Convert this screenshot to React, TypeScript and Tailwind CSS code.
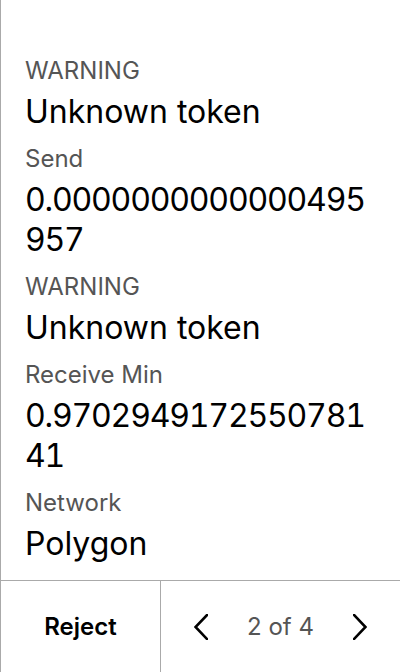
const rows = [
  { label: 'WARNING', value: 'Unknown token', num: false },
  { label: 'Send', value: '0.0000000000000495957', num: true },
  { label: 'WARNING', value: 'Unknown token', num: false },
  { label: 'Receive Min', value: '0.970294917255078141', num: true },
  { label: 'Network', value: 'Polygon', num: false }
];

const Chevron = ({ flip }: { flip?: boolean }) => (
  <svg width="14" height="26" viewBox="0 0 14 26" fill="none">
    <polyline
      points={flip ? '1,1 12.5,13 1,25' : '13,1 1.5,13 13,25'}
      stroke="black"
      strokeWidth="2.6"
      strokeLinecap="square"
    />
  </svg>
);

const App = () => {
  return (
    <div className="h-[672px] w-[400px] flex flex-col bg-white border-l border-[#aaaaaa] font-['Inter',sans-serif]">
      <div className="flex-1 pt-[56px] pl-[24px] pr-[24px]">
        {rows.map((row, index) => (
          <div key={index} className="mb-[12px]">
            <p className="text-[24px] leading-[30px] text-[#555555]">{row.label}</p>
            <p
              className={
                row.num
                  ? 'mt-[6px] text-[32px] leading-[40px] text-black break-all tabular-nums tracking-[-1.2px]'
                  : 'mt-[6px] text-[32px] leading-[40px] text-black break-all'
              }
            >
              {row.value}
            </p>
          </div>
        ))}
      </div>
      <div className="h-[92px] flex border-t border-[#aaaaaa]">
        <div className="w-[160px] flex items-center justify-center border-r border-[#aaaaaa]">
          <span className="text-[24px] font-semibold text-black">Reject</span>
        </div>
        <div className="flex-1 grid grid-cols-3 items-center justify-items-center">
          <Chevron />
          <span className="text-[24px] text-[#555555]">2 of 4</span>
          <Chevron flip />
        </div>
      </div>
    </div>
  );
};

export default App;
